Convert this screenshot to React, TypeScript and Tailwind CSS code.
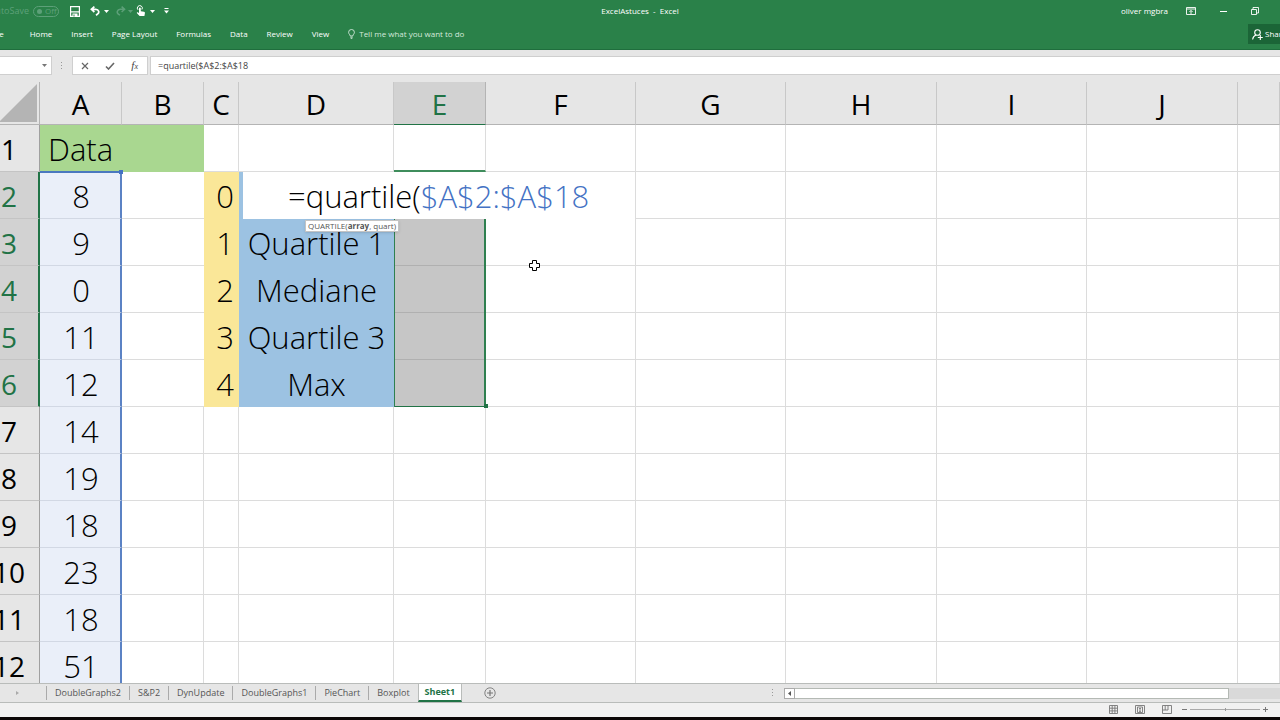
import type { ReactNode } from "react";

const columns = ["A", "B", "C", "D", "E", "F", "G", "H", "I", "J", ""];
const data = [8, 9, 0, 11, 12, 14, 19, 18, 23, 18, 51];
const labels = ["", "Quartile 1", "Mediane", "Quartile 3", "Max"];
const menus = ["Home", "Insert", "Page Layout", "Formulas", "Data", "Review", "View"];
const sheets = ["DoubleGraphs2", "S&P2", "DynUpdate", "DoubleGraphs1", "PieChart", "Boxplot"];

function IconButton({ label, className = "", children }: { label: string; className?: string; children: ReactNode }) {
  return (
    <button aria-label={label} className={`flex shrink-0 items-center justify-center ${className}`}>
      {children}
    </button>
  );
}

function Caret({ className = "" }: { className?: string }) {
  return (
    <svg viewBox="0 0 5 3" className={`h-[3px] w-[5px] ${className}`} fill="currentColor">
      <path d="M0 0h5L2.500 3z" />
    </svg>
  );
}

function TitleBar() {
  return (
    <div className="grid h-[22px] grid-cols-[1fr_auto_1fr] items-center">
      <div className="flex items-center">
        <button className="-ml-[5px] flex w-16 items-center justify-end gap-1 text-[#5da079]">
          <span className="text-[9px] whitespace-nowrap">AutoSave</span>
          <span className="flex h-[11px] w-[26px] shrink-0 items-center gap-[3px] rounded-full border border-[#5da079] px-[3px] leading-none">
            <i className="size-[5px] shrink-0 rounded-full bg-[#5da079]" />
            Off
          </span>
        </button>
        <IconButton label="Save" className="ml-[11px]">
          <svg viewBox="0 0 10 11" className="h-[11px] w-[10px]" fill="none" stroke="currentColor">
            <path d="M.6.6h8.800v9.800H.6zM.8 5.800h8.400" strokeWidth="1.200" />
            <path d="M2.500 7.500h5v3h-5z" fill="currentColor" stroke="none" />
            <path d="M4 8.500v2" stroke="#2a8149" />
          </svg>
        </IconButton>
        <IconButton label="Undo" className="ml-[10px] gap-[3px]">
          <svg viewBox="0 0 11 10" className="h-[10px] w-[11px]" fill="none" stroke="currentColor" strokeWidth="1.700">
            <path d="M1.200 3.300h4.600a3 2.700 0 0 1 1.500 5L6 9.200M4.400.6 1.400 3.300l3 2.700" />
          </svg>
          <Caret />
        </IconButton>
        <IconButton label="Redo" className="ml-[6px] gap-[2px] text-[#5da079]">
          <svg viewBox="0 0 11 10" className="h-[10px] w-[11px]" fill="none" stroke="currentColor" strokeWidth="1.500">
            <path d="M9.800 3.300H5.200a3 2.700 0 0 0-1.500 5L5 9.200M6.600.6l3 2.700-3 2.700" />
          </svg>
          <Caret />
        </IconButton>
        <IconButton label="Touch mode" className="ml-[3px] gap-1">
          <svg viewBox="0 0 10 12" className="h-3 w-[10px]" fill="currentColor">
            <path d="M3 3.200C3 2.200 4.800 2.200 4.800 3.200v3L8 6.800c.8.2 1 .7.900 1.500L8.400 11H3.600L1 8.300c-.5-.7.300-1.200 1-.8l1 .6z" />
            <path d="M2 4.800A2.500 2.500 0 1 1 5.900 4.500" fill="none" stroke="currentColor" strokeWidth="1" />
          </svg>
          <Caret />
        </IconButton>
        <IconButton label="Customize Quick Access Toolbar" className="ml-[9px]">
          <svg viewBox="0 0 5 6" className="h-[6px] w-[5px]" fill="currentColor">
            <path d="M.500 0h4v1h-4zM0 2.500h5L2.500 5.500z" />
          </svg>
        </IconButton>
      </div>
      <div className="whitespace-pre">ExcelAstuces  -  Excel</div>
      <div className="flex items-center justify-end pr-[21px]">
        <span>oliver mgbra</span>
        <IconButton label="Ribbon Display Options" className="ml-[18px]">
          <svg viewBox="0 0 10 8" className="h-2 w-[10px]" fill="none" stroke="currentColor">
            <path d="M.500.500h9v7h-9zM.500 2h9M5 7V3.500M3.400 5 5 3.400 6.600 5" strokeWidth=".9" />
          </svg>
        </IconButton>
        <IconButton label="Minimize" className="ml-6">
          <svg viewBox="0 0 7 7" className="size-[7px]" stroke="currentColor">
            <path d="M0 3.500h7" />
          </svg>
        </IconButton>
        <IconButton label="Restore" className="ml-6">
          <svg viewBox="0 0 8 8" className="size-2" fill="none" stroke="currentColor" strokeWidth=".9">
            <path d="M.500 2.500h5v5h-5zM2 2.500v-2h5.500V6H5.600" />
          </svg>
        </IconButton>
      </div>
    </div>
  );
}

function Ribbon() {
  return (
    <nav className="flex h-6 items-center justify-between overflow-hidden">
      <div className="-ml-[9px] flex items-center gap-[19px] whitespace-nowrap">
        <button className="mr-[7px]">File</button>
        {menus.map((m) => (
          <button key={m}>{m}</button>
        ))}
        <button className="flex items-center gap-1 text-[#d4e9dc]">
          <svg viewBox="0 0 7 10" className="h-[10px] w-[7px]" fill="none" stroke="currentColor" strokeWidth=".9">
            <path d="M2.200 7C2.200 5.500.600 5 .600 3.300a2.900 2.800 0 0 1 5.800 0C6.400 5 4.800 5.500 4.800 7zM2.300 8.200h2.400M2.700 9.400h1.600" />
          </svg>
          Tell me what you want to do
        </button>
      </div>
      <button className="-mr-2 flex h-5 w-10 items-center gap-[2px] bg-[#1b6537] pl-1">
        <svg viewBox="0 0 11 11" className="size-[11px] shrink-0" fill="none" stroke="currentColor" strokeWidth="1.100">
          <circle cx="5.500" cy="3.500" r="2.800" />
          <path d="M.600 10.500c.4-2.400 1.600-3.800 3.400-4.400M8.300 6v5M5.800 8.500h5" />
        </svg>
        Share
      </button>
    </nav>
  );
}

function FormulaBar() {
  return (
    <div className="flex h-[19px] shrink-0 items-stretch text-[#444]">
      <div className="flex w-[52px] items-center border border-l-0 border-[#cfcfcf] bg-white pr-1">
        <input aria-label="Name box" className="h-full w-full min-w-0 bg-transparent outline-none" />
        <IconButton label="Open name box" className="text-[#777]">
          <Caret />
        </IconButton>
      </div>
      <div className="flex w-[20px] items-center justify-center">
        <svg viewBox="0 0 2 8" className="h-2 w-[2px]" fill="#999">
          <path d="M0 0h1v1H0zM0 3h1v1H0zM0 6h1v1H0z" />
        </svg>
      </div>
      <div className="mr-[2px] grid w-[76px] grid-cols-3 border border-[#cfcfcf] bg-white">
        <IconButton label="Cancel">
          <svg viewBox="0 0 8 8" className="size-2" stroke="#666" strokeWidth="1.200">
            <path d="m1 1 6 6M7 1 1 7" />
          </svg>
        </IconButton>
        <IconButton label="Enter">
          <svg viewBox="0 0 10 8" className="h-2 w-[10px]" fill="none" stroke="#666" strokeWidth="1.600">
            <path d="m1 4.500 2.500 2.500L9 1" />
          </svg>
        </IconButton>
        <IconButton label="Insert function">
          <span className="font-['Liberation_Serif',serif] text-[11px] leading-none italic">
            f<span className="text-[8px]">x</span>
          </span>
        </IconButton>
      </div>
      <input
        aria-label="Formula"
        defaultValue="=quartile($A$2:$A$18"
        className="min-w-0 flex-1 border border-r-0 border-[#cfcfcf] bg-white px-[7px] outline-none"
      />
    </div>
  );
}

function CellEditor() {
  return (
    <div className="absolute top-0 left-[4px] z-20 h-[47px] w-[392px] bg-white">
      <div
        role="textbox"
        aria-label="Cell D2"
        contentEditable
        suppressContentEditableWarning
        className="h-full pl-[45px] text-left leading-[48px] whitespace-nowrap outline-none"
      >
        =quartile(<span className="text-[#4472c4]">$A$2:$A$18</span>
      </div>
      <div
        role="tooltip"
        className="absolute top-[48px] left-[62px] h-3 border border-[#c4c4c4] bg-white px-[2px] text-[8px] leading-[10px] font-normal whitespace-nowrap text-[#555] shadow-sm"
      >
        QUARTILE(<b>array</b>, quart)
      </div>
    </div>
  );
}

function Grid() {
  const line = "border-r border-b border-[#dcdcdc]";
  return (
    <main className="relative min-h-0 flex-1 overflow-hidden bg-white">
      <table className="-ml-[22px] w-[calc(100%+22px)] table-fixed border-separate border-spacing-0 text-[31px] leading-none [&_td]:pt-[2px] [&_th]:pt-[2px]">
        <colgroup>
          <col className="w-[62px]" />
          <col className="w-[82px]" />
          <col className="w-[82px]" />
          <col className="w-[35px]" />
          <col className="w-[155px]" />
          <col className="w-[92px]" />
          <col className="w-[150px]" />
          <col className="w-[150px]" />
          <col className="w-[151px]" />
          <col className="w-[150px]" />
          <col className="w-[151px]" />
          <col />
        </colgroup>
        <thead>
          <tr className="h-[43px] bg-[#e6e6e6]">
            <th aria-label="Select all" className="border-r border-b border-[#b4b4b4] p-0 align-bottom">
              <svg viewBox="0 0 38 38" className="mr-[2px] mb-[2px] ml-auto size-[38px]" fill="#b4b4b4">
                <path d="M38 0v38H0z" />
              </svg>
            </th>
            {columns.map((c) => (
              <th
                key={c || "last"}
                scope="col"
                className={`border-r border-b p-0 text-[28px] font-normal ${
                  c === "E" ? "border-r-[#b4b4b4] border-b-[#217346] bg-[#d2d2d2] text-[#217346]" : "border-r-[#c8c8c8] border-b-[#b4b4b4]"
                }`}
              >
                {c}
              </th>
            ))}
          </tr>
        </thead>
        <tbody className="font-light">
          {Array.from({ length: 12 }, (_, r) => {
            const active = r >= 1 && r <= 5;
            return (
              <tr key={r} className="h-[47px]">
                <th
                  scope="row"
                  className={`border-b border-b-[#c4c4c4] p-0 text-[28px] font-normal ${
                    active ? "border-r-2 border-r-[#217346] bg-[#d2d2d2] pl-[2px] text-[#217346]" : "border-r border-r-[#a0a0a0] bg-[#e6e6e6] pl-px"
                  }`}
                >
                  {r + 1}
                </th>
                {r === 0 ? (
                  <td colSpan={2} className="border-b border-[#a9d790] bg-[#a9d790] p-0 pl-2">
                    Data
                  </td>
                ) : (
                  <>
                    <td className="relative border-r-2 border-b border-r-[#5b82c4] border-b-[#d2d8e4] bg-[#eaeff9] p-0 pl-[2px] text-center">
                      {data[r - 1]}
                      {r === 1 && (
                        <>
                          <i className="absolute inset-x-0 -top-px h-[2px] bg-[#4a78bf]" />
                          <i className="absolute -top-[2px] -right-[3px] z-10 size-1 bg-[#4472c4]" />
                        </>
                      )}
                    </td>
                    <td className={`p-0 ${active ? "border-b border-[#dcdcdc]" : line}`} />
                  </>
                )}
                <td className={active ? "border-b border-[#fae798] bg-[#fae798] p-0 pr-[5px] text-right" : line}>
                  {active ? r - 1 : null}
                </td>
                <td
                  className={
                    active
                      ? "relative border-b border-[#9cc2e2] bg-[#9cc2e2] p-0 text-center whitespace-nowrap"
                      : line
                  }
                >
                  {active ? labels[r - 1] : null}
                  {r === 1 && <CellEditor />}
                </td>
                <td
                  className={
                    active
                      ? `relative border-b bg-[#c6c6c6] p-0 ${r === 5 ? "border-b-[#217346]" : "border-b-[#b0b0b0]"}`
                      : r === 0
                        ? "border-r border-b-2 border-r-[#dcdcdc] border-b-[#3f8d5c]"
                        : line
                  }
                >
                  {active && <i className="absolute inset-x-0 top-0 -bottom-px border-r-2 border-l border-[#2f8050]" />}
                  {r === 5 && <i className="absolute -right-[2px] -bottom-[2px] size-1 bg-[#217346]" />}
                </td>
                {[0, 1, 2, 3, 4, 5].map((c) => (
                  <td key={c} className={line} />
                ))}
              </tr>
            );
          })}
        </tbody>
      </table>
      <svg viewBox="0 0 11 11" className="absolute top-[178px] left-[529px] size-[11px]" fill="white" stroke="black">
        <path d="M3.500.500h4v3h3v4h-3v3h-4v-3h-3v-4h3z" />
      </svg>
    </main>
  );
}

function SheetTabs() {
  return (
    <div className="flex h-[20px] shrink-0 items-stretch border-y border-[#b9bcba] bg-[#e6e6e6] text-[#555]">
      <div className="flex w-[46px] items-center pl-4 text-[#aaa]">
        <svg viewBox="0 0 3 4" className="h-1 w-[3px]" fill="currentColor">
          <path d="M0 0v4l3-2z" />
        </svg>
      </div>
      <div className="flex items-center">
        {sheets.map((s) => (
          <button key={s} className="h-[14px] border-l border-[#aaa] px-[8px] leading-[12px] whitespace-nowrap">
            {s}
          </button>
        ))}
        <button className="-mt-px h-[18px] border-x border-b-2 border-x-[#b9bcba] border-b-[#217346] bg-white px-[6px] font-bold text-[#217346]">
          Sheet1
        </button>
      </div>
      <IconButton label="New sheet" className="ml-[22px]">
        <svg viewBox="0 0 12 12" className="size-3" fill="none" stroke="#777" strokeWidth=".9">
          <circle cx="6" cy="6" r="5.200" />
          <path d="M6 3v6M3 6h6" strokeWidth="1.200" />
        </svg>
      </IconButton>
      <div className="ml-auto flex items-center">
        <svg viewBox="0 0 2 8" className="mr-[10px] h-2 w-[2px]" fill="#999">
          <path d="M0 0h1v1H0zM0 3h1v1H0zM0 6h1v1H0z" />
        </svg>
        <div className="flex h-[11px] w-[496px] bg-[#d9d9d9]">
          <IconButton label="Scroll left" className="w-[11px] border border-[#aaa] bg-white">
            <svg viewBox="0 0 3 5" className="h-[5px] w-[3px]" fill="#555">
              <path d="M3 0v5L0 2.500z" />
            </svg>
          </IconButton>
          <div className="w-[434px] border border-l-0 border-[#b4b9b4] bg-white" />
        </div>
      </div>
    </div>
  );
}

function StatusBar() {
  return (
    <footer className="flex h-[14px] shrink-0 items-center justify-end bg-[#f1f1f1] pr-3 pb-px text-[#777]">
      <IconButton label="Normal view" className="mr-[17px]">
        <svg viewBox="0 0 9 9" className="size-[9px]" fill="none" stroke="currentColor" strokeWidth=".9">
          <path d="M.500.500h8v8h-8zM3.200.500v8M5.900.500v8M.500 3.200h8M.500 5.900h8" />
        </svg>
      </IconButton>
      <IconButton label="Page layout view" className="mr-[17px]">
        <svg viewBox="0 0 10 9" className="h-[9px] w-[10px]" fill="none" stroke="currentColor" strokeWidth=".9">
          <path d="M.500.500h9v8h-9zM2.500 2h5v5.500h-5zM4 3.500h2M4 5h2M4 6.400h2" />
        </svg>
      </IconButton>
      <IconButton label="Page break preview" className="mr-[10px]">
        <svg viewBox="0 0 10 9" className="h-[9px] w-[10px]" fill="none" stroke="currentColor" strokeWidth=".9">
          <path d="M.500.500h9v8h-9zM.500 5h5.500V.500M3.200.500V5" />
        </svg>
      </IconButton>
      <IconButton label="Zoom out">
        <svg viewBox="0 0 5 5" className="size-[5px]" stroke="currentColor">
          <path d="M0 2.500h5" />
        </svg>
      </IconButton>
      <input
        type="range"
        aria-label="Zoom"
        className="mx-[3px] h-1 w-[70px] appearance-none bg-transparent [&::-webkit-slider-runnable-track]:h-px [&::-webkit-slider-runnable-track]:bg-[#aaa] [&::-webkit-slider-thumb]:-mt-px [&::-webkit-slider-thumb]:h-[3px] [&::-webkit-slider-thumb]:w-px [&::-webkit-slider-thumb]:appearance-none [&::-webkit-slider-thumb]:bg-[#999]"
      />
      <IconButton label="Zoom in">
        <svg viewBox="0 0 5 5" className="size-[5px]" stroke="currentColor">
          <path d="M0 2.500h5M2.500 0v5" />
        </svg>
      </IconButton>
    </footer>
  );
}

export default function App() {
  return (
    <div className="flex h-screen flex-col overflow-hidden bg-[#e6e6e6] font-['Open_Sans','Noto_Sans',sans-serif] text-[9px] leading-3 text-black">
      <header className="h-[50px] shrink-0 border-b border-[#1f6e3d] bg-[#2a8149] text-[8px] text-white">
        <TitleBar />
        <Ribbon />
      </header>
      <div className="shrink-0 pt-[6px] pb-[7px]">
        <FormulaBar />
      </div>
      <Grid />
      <SheetTabs />
      <StatusBar />
      <div className="h-[3px] shrink-0 bg-[#0c0808]" />
    </div>
  );
}
